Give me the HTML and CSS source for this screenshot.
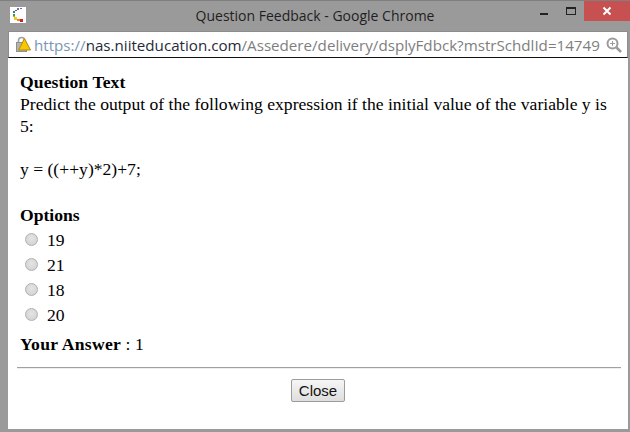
FILE: index.html
```html
<!DOCTYPE html>
<html lang="en">
<head>
<meta charset="utf-8">
<title>Question Feedback - Google Chrome</title>
<link rel="stylesheet" href="styles.css">
</head>
<body>
<div class="window">
  <div class="titlebar">
    <div class="favicon">
      <svg width="16" height="16" viewBox="0 0 16 16">
        <rect width="16" height="16" fill="#fff"/>
        <rect x="10" y="1" width="2" height="1" fill="#8a5aa8"/>
        <rect x="7" y="1" width="2" height="2" fill="#7a6ab0"/>
        <rect x="5" y="3" width="2" height="1" fill="#4a6a90"/>
        <rect x="3" y="4" width="2" height="2" fill="#3a7a8a"/>
        <rect x="3" y="7" width="2" height="2" fill="#3f9a4a"/>
        <rect x="3" y="9" width="2" height="1" fill="#8fb83a"/>
        <rect x="4" y="10" width="3" height="3" fill="#f0c820"/>
        <rect x="7" y="12" width="3" height="2" fill="#e8802a"/>
        <rect x="10" y="12" width="3" height="3" fill="#d02028"/>
      </svg>
    </div>
    <div class="title">Question Feedback - Google Chrome</div>
    <div class="controls">
      <span class="btn-min"><span class="min-glyph"></span></span>
      <span class="btn-max"><span class="max-glyph"></span></span>
      <span class="btn-close">
        <svg width="10" height="10" viewBox="0 0 10 10"><path d="M1.5 1.5 L8.5 8.5 M8.5 1.5 L1.5 8.5" stroke="#fff" stroke-width="2"/></svg>
      </span>
    </div>
  </div>
  <div class="addressbar">
    <svg class="lock" width="17" height="17" viewBox="0 0 17 17">
      <path d="M2.5 7 V4.5 a3 3 0 0 1 6 0 V7" fill="none" stroke="#a0a0a0" stroke-width="1.6"/>
      <rect x="0.5" y="6.5" width="10" height="9" fill="#b4b4b4" stroke="#8f8f8f" stroke-width="1"/>
      <path d="M8.5 2.5 L14.5 14 H2.5 Z" fill="#f5c800" stroke="#b08a10" stroke-width="1"/>
    </svg>
    <div class="url"><span class="scheme">https://</span><span class="host">nas.niiteducation.com</span><span class="path">/Assedere/delivery/dsplyFdbck?mstrSchdlId=14749</span></div>
    <svg class="zoom" width="16" height="16" viewBox="0 0 16 16">
      <circle cx="6.5" cy="6.5" r="5" fill="none" stroke="#9a9a9a" stroke-width="2"/>
      <path d="M10.5 10.5 L15 15" stroke="#9a9a9a" stroke-width="2.5"/>
      <path d="M4 6.5 H9 M6.5 4 V9" stroke="#9a9a9a" stroke-width="1"/>
    </svg>
  </div>
  <main class="content">
    <div class="body-text">
      <div class="heading question-head">Question Text</div>
      <div class="para">Predict the output of the following expression if the initial value of the variable y is 5:</div>
      <div class="para expr">y = ((++y)*2)+7;</div>
      <div class="heading options-head">Options</div>
      <ul class="options">
        <li><span class="radio"></span><span>19</span></li>
        <li><span class="radio"></span><span>21</span></li>
        <li><span class="radio"></span><span>18</span></li>
        <li><span class="radio"></span><span>20</span></li>
      </ul>
      <div class="answer"><b class="answer-label">Your Answer</b> : 1</div>
    </div>
    <div class="rule"></div>
    <div class="actions"><button class="close" type="button">Close</button></div>
  </main>
</div>
</body>
</html>
```
FILE: styles.css
```css
* { box-sizing: border-box; }
html, body { margin: 0; padding: 0; }
body { width: 630px; height: 432px; overflow: hidden; }
.window {
  width: 630px; height: 432px; background: #9a9a9a;
  border-top: 1px solid #7f7f7f;
  display: flex; flex-direction: column;
  padding: 0 2px 3px 8px;
}
.titlebar { height: 30px; display: flex; align-items: flex-start; position: relative; flex: none; }
.favicon { width: 16px; height: 16px; margin: 6px 0 0 2px; }
.favicon svg { display: block; }
.title {
  position: absolute; left: 0; right: 6px; top: 6px; text-align: center;
  font: 14px/18px "Open Sans", "Liberation Sans", sans-serif; color: #1f1f1f;
}
.controls { position: absolute; right: -2px; top: 0; display: flex; height: 20px; }
.btn-min { width: 27px; display: flex; justify-content: center; align-items: center; }
.min-glyph { width: 8px; height: 2px; background: #222; margin-top: 5px; }
.btn-max { width: 27px; display: flex; justify-content: center; align-items: center; }
.max-glyph { width: 10px; height: 8px; border: 1px solid #222; border-top-width: 2px; }
.btn-close { width: 46px; background: #c75050; display: flex; justify-content: center; align-items: center; }
.addressbar {
  height: 27px; background: #fff; flex: none;
  border: 1px solid #8c8c8c; border-bottom: 1px solid #111;
  display: flex; align-items: center; padding: 0 5px 0 7px;
}
.lock { flex: none; margin-right: 1px; }
.url { flex: 1; font: 15.15px "Open Sans", "Liberation Sans", sans-serif; white-space: nowrap; overflow: hidden; color: #7c7c7c; }
.scheme { color: #7b95b5; }
.host { color: #1f2a3a; }
.path { color: #7e7e7e; }
.zoom { flex: none; }
.content {
  flex: 1; background: #fff; padding: 0 7px 0 9px;
  font: 17.6px/22px "Liberation Serif", "Times New Roman", serif; color: #000;
  display: flex; flex-direction: column;
}
.body-text { padding: 13px 3px 0; }
.heading { font-weight: 700; line-height: 22px; }
.question-head { letter-spacing: 0.1px; }
.para { line-height: 22px; }
.expr { margin-top: 21px; }
.options-head { margin-top: 24px; }
.options { list-style: none; margin: 1px 0 0; padding: 0; }
.options li { height: 25px; display: flex; align-items: center; }
.radio {
  width: 13px; height: 13px; border-radius: 50%; margin: 0 9px 0 5px;
  background: radial-gradient(circle at 50% 40%, #e4e4e4, #cfcfcf);
  border: 1px solid #b0b0b0;
}
.answer { margin-top: 6px; }
.answer-label { letter-spacing: 0.3px; }
.rule { height: 2px; margin-top: 12px; background: #a0a0a0; border-bottom: 1px solid #eee; }
.actions { display: flex; justify-content: center; margin-top: 10px; padding-right: 2px; }
.close {
  width: 54px; height: 23px; padding: 0;
  font: 15px "Liberation Sans", Arial, sans-serif; color: #111;
  border: 1px solid #9c9c9c; border-radius: 2px;
  background: linear-gradient(#f6f6f6, #dedede);
}
```
